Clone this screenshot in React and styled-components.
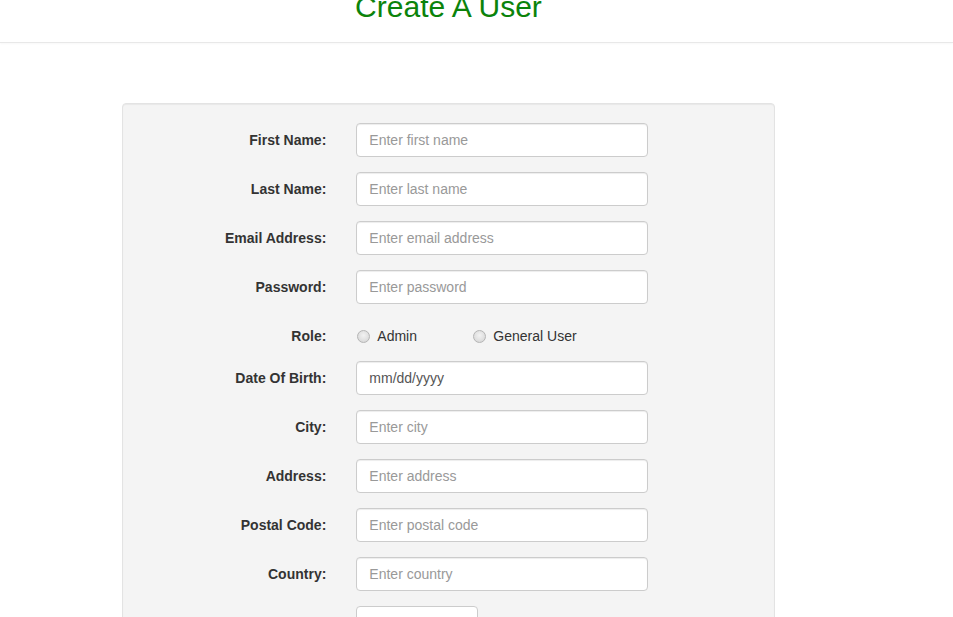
import styled, { createGlobalStyle } from "styled-components";

const GlobalStyle = createGlobalStyle`
  html, body {
    margin: 0;
    padding: 0;
    background: #fff;
    font-family: "Liberation Sans", Arial, Helvetica, sans-serif;
    font-size: 14px;
    line-height: 1.42857;
    color: #333;
    overflow: hidden;
  }
  * {
    box-sizing: border-box;
  }
`;

const fields = [
  { label: "First Name:", placeholder: "Enter first name" },
  { label: "Last Name:", placeholder: "Enter last name" },
  { label: "Email Address:", placeholder: "Enter email address", type: "email" },
  { label: "Password:", placeholder: "Enter password", type: "password" },
  { label: "Role:", radios: ["Admin", "General User"] },
  { label: "Date Of Birth:", value: "mm/dd/yyyy" },
  { label: "City:", placeholder: "Enter city" },
  { label: "Address:", placeholder: "Enter address" },
  { label: "Postal Code:", placeholder: "Enter postal code" },
  { label: "Country:", placeholder: "Enter country" },
];

const App = () => {
  return (
    <Page>
      <GlobalStyle />
      <Header>
        <Title>Create A User</Title>
      </Header>
      <Wrap>
        <Well>
          <form onSubmit={(e) => e.preventDefault()}>
            {fields.map((f) => (
              <FormGroup key={f.label} $compact={!!f.radios}>
                <Label>{f.label}</Label>
                <Field>
                  {f.radios ? (
                    <Radios>
                      {f.radios.map((r) => (
                        <RadioLabel key={r}>
                          <Radio type="radio" name="role" />
                          {r}
                        </RadioLabel>
                      ))}
                    </Radios>
                  ) : f.value ? (
                    <Input type="text" defaultValue={f.value} readOnly />
                  ) : (
                    <Input type={f.type || "text"} placeholder={f.placeholder} />
                  )}
                </Field>
              </FormGroup>
            ))}
            <FormGroup>
              <Label />
              <Field>
                <SubmitButton type="submit">Create User</SubmitButton>
              </Field>
            </FormGroup>
          </form>
        </Well>
      </Wrap>
    </Page>
  );
};

const Page = styled.div`
  width: 953px;
  min-height: 617px;
`;

const Header = styled.div`
  border-bottom: 1px solid #e8e8e8;
  box-shadow: 0 1px 2px rgba(0, 0, 0, 0.03);
  padding-bottom: 19px;
`;

const Title = styled.h2`
  width: 897px;
  margin: -10px 0 0;
  font-size: 30px;
  font-weight: 400;
  line-height: 33px;
  text-align: center;
  color: #0b830b;
`;

const Wrap = styled.div`
  padding: 60px 0 0 122px;
`;

const Well = styled.div`
  width: 653px;
  min-height: 560px;
  padding: 19px;
  background-color: #f4f4f4;
  border: 1px solid #e3e3e3;
  border-radius: 4px;
  box-shadow: inset 0 1px 1px rgba(0, 0, 0, 0.05);
`;

const FormGroup = styled.div`
  display: grid;
  grid-template-columns: 214.33px 321.5px;
  margin: 0 -15px ${(p) => (p.$compact ? "15px" : "15px")};
  min-height: ${(p) => (p.$compact ? "27px" : "34px")};
`;

const Label = styled.label`
  padding: 7px 15px 0;
  text-align: right;
  font-weight: 700;
  line-height: 20px;
  color: #333;
`;

const Field = styled.div`
  padding: 0 15px;
`;

const Input = styled.input`
  display: block;
  width: 100%;
  height: 34px;
  padding: 6px 12px;
  font-family: inherit;
  font-size: 14px;
  line-height: 1.42857;
  color: #555;
  background: #fff;
  border: 1px solid #ccc;
  border-radius: 4px;
  box-shadow: inset 0 1px 1px rgba(0, 0, 0, 0.075);
  outline: none;

  &::placeholder {
    color: #999;
  }
`;

const Radios = styled.div`
  display: flex;
  padding-top: 7px;
  line-height: 20px;
`;

const RadioLabel = styled.label`
  display: flex;
  align-items: center;
  width: 116px;
  color: #333;
`;

const Radio = styled.input`
  appearance: none;
  width: 13px;
  height: 13px;
  margin: 0 7px 0 1px;
  border-radius: 50%;
  border: 1px solid #b5b5b5;
  background: radial-gradient(circle at 50% 40%, #f2f2f2 0%, #dcdcdc 70%, #cfcfcf 100%);
`;

const SubmitButton = styled.button`
  width: 122px;
  height: 34px;
  padding: 12px 12px 6px;
  font-family: inherit;
  font-size: 14px;
  color: #333;
  background: #fff;
  border: 1px solid #ccc;
  border-radius: 4px;
`;

export default App;
